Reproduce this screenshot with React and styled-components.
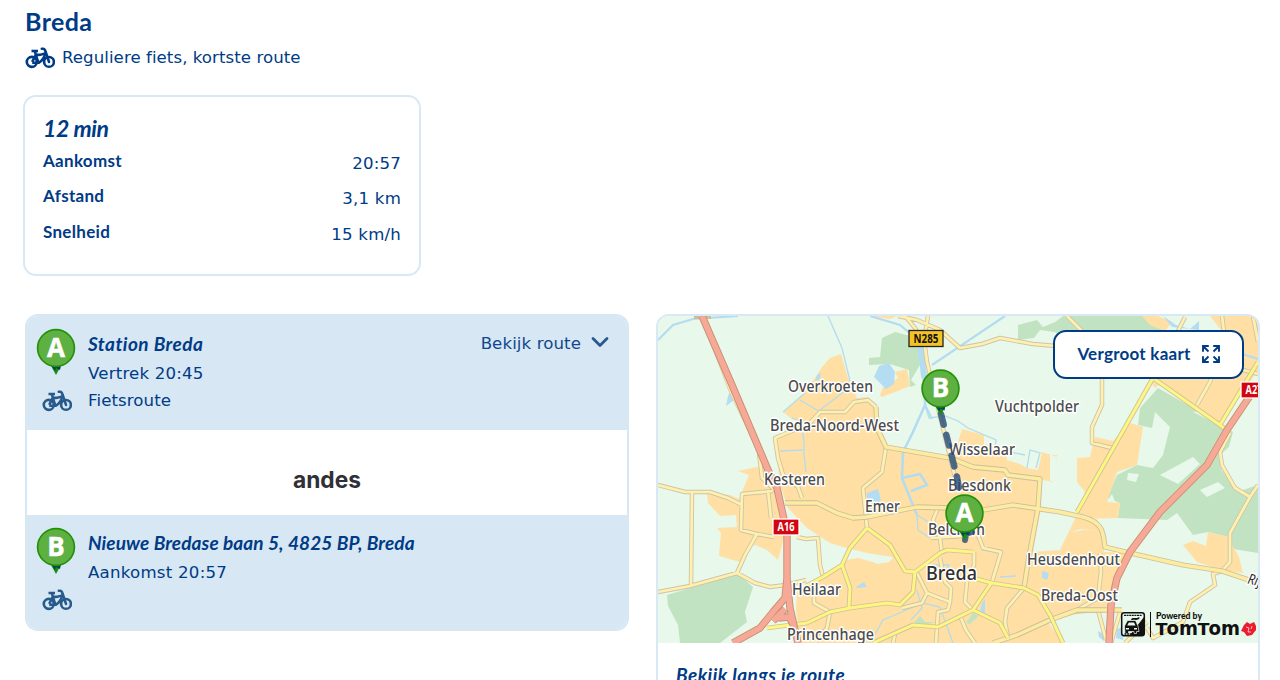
import React from 'react'
import styled, { createGlobalStyle } from 'styled-components'

const GlobalStyle = createGlobalStyle`
	* {
		box-sizing: border-box;
	}

	body {
		margin: 0;
		background: #fff;
		overflow: hidden;
	}
`

const Page = styled.main`
	width: 1280px;
	height: 680px;
	overflow: hidden;
	padding: 4px 20px 0 25px;
	background-color: #fff;
	color: #003b86;
	font-family: 'DejaVu Sans', Verdana, sans-serif;
	font-size: 16.6px;
	letter-spacing: 0.06px;
`

const Title = styled.h1`
	margin: 0;
	height: 35px;
	font: 700 25px/35px Lato, sans-serif;
	letter-spacing: 0.4px;
`

const Mode = styled.div`
	display: flex;
	align-items: center;
	gap: 7px;
	height: 36px;
	white-space: nowrap;
`

const BikeSvg = styled.svg`
	display: block;
	flex: none;
	width: 30px;
	height: 23px;
	color: ${(props) => props.$color};
`

const Summary = styled.section`
	width: 398px;
	height: 181px;
	margin: 19.5px 0 0 -2px;
	padding: 15px 18px;
	border: 2px solid #d8e9f5;
	border-radius: 13px;
`

const Duration = styled.h2`
	margin: 0 0 2px;
	font: italic 700 23px/32px Lato, sans-serif;
	letter-spacing: -0.4px;
`

const SummaryRow = styled.div`
	display: flex;
	justify-content: space-between;
	height: 35.5px;
`

const Term = styled.span`
	font: 700 17px/29px Lato, sans-serif;
	letter-spacing: 0.3px;
`

const Value = styled.span`
	line-height: 35px;
	letter-spacing: 0.2px;
`

const Columns = styled.div`
	display: flex;
	gap: 27px;
	margin-top: 38.5px;
	align-items: flex-start;
`

const RouteCard = styled.section`
	width: 604px;
	height: 317px;
	border: 2px solid #d7e7f4;
	border-radius: 13px;
	overflow: hidden;
`

const Stop = styled.div`
	display: flex;
	height: 114px;
	padding: 12px 17px 0 9px;
	background-color: #d7e7f4;
`

const StopIcons = styled.div`
	display: flex;
	flex-direction: column;
	width: 40px;
	gap: 13px;

	${BikeSvg} {
		margin-left: 6px;
	}
`

const PinSvg = styled.svg`
	display: block;
	width: 40px;
	height: 48px;
	overflow: visible;
`

const StopText = styled.div`
	flex: 1;
	padding: 0 0 0 12px;
	white-space: nowrap;
`

const StopName = styled.h3`
	margin: 0;
	font: italic 700 19px/32px Lato, sans-serif;
	letter-spacing: ${(props) => props.$spacing || 0}px;
`

const StopLine = styled.div`
	line-height: 27px;
	letter-spacing: ${(props) => props.$spacing || 0.1}px;
`

const RouteToggle = styled.button`
	display: flex;
	align-items: center;
	align-self: flex-start;
	gap: 9px;
	height: 30px;
	padding: 0;
	border: none;
	background: none;
	color: #10488f;
	font: inherit;
	letter-spacing: 0.1px;
`

const Sponsor = styled.div`
	display: flex;
	align-items: center;
	justify-content: center;
	height: 85px;
	padding-top: 11px;
	color: #303036;
`

const MapCard = styled.section`
	width: 604px;
	height: 380px;
	border: 2px solid #d8e9f5;
	border-radius: 13px;
	overflow: hidden;
`

const MapArea = styled.div`
	position: relative;
	height: 327px;
`

const MapSvg = styled.svg`
	display: block;
	width: 600px;
	height: 327px;
`

const EnlargeButton = styled.button`
	position: absolute;
	top: 14px;
	right: 14px;
	display: flex;
	align-items: center;
	justify-content: center;
	gap: 11px;
	width: 191px;
	height: 49px;
	padding: 0 0 2px;
	border: 2px solid #003b86;
	border-radius: 13px;
	background-color: #fff;
	color: #003b86;
	font: 700 17px/24px Lato, sans-serif;
	letter-spacing: 0.25px;
	white-space: nowrap;
`

const AlongRoute = styled.h3`
	margin: 0;
	padding: 16px 18px;
	font: italic 700 19px/32px Lato, sans-serif;
	letter-spacing: 0.43px;
`

const Bike = ({ color = '#003b86' }) => (
	<BikeSvg $color={color} viewBox="0 0 30 23" fill="none" stroke="currentColor" strokeWidth="2.600">
		<circle cx="6.800" cy="15.9" r="5" />
		<circle cx="24" cy="15.9" r="4.900" />
		<path d="M6.500 5H13" />
		<path d="M10 5.500L10.800 8.800L7.200 15.9M10.500 8.900H13.500C16.500 8.900 18 7.700 20.2 7.500M10.800 8.800L13.400 16.700H7.2M20.3 7.5C19.500 11 17.500 14.500 13.600 17" />
		<path d="M16.800 2.7H18.2C19.6 2.7 20 3.8 20.5 5.500L24 15.9" strokeLinecap="round" />
	</BikeSvg>
)

const PinShape = ({ letter }) => (
	<g>
		<path d="M14.5 37L20 47L25.500 37Z" fill="#16900c" />
		<path d="M15.500 38L19 43L20 40L24 42L25 37Z" fill="#07415f" />
		<circle cx="20" cy="20" r="18.400" fill="#5fb043" stroke="#239209" strokeWidth="1.700" />
		<text x="20" y="28.800" textAnchor="middle" fill="#fff" stroke="#fff" strokeWidth=".5" fontFamily="Open Sans, sans-serif" fontWeight="700" fontSize="26" letterSpacing="0">{letter}</text>
	</g>
)

const Pin = ({ letter }) => (
	<PinSvg viewBox="0 0 40 48">
		<PinShape letter={letter} />
	</PinSvg>
)

const urban = [
	'M841 354L830 358L822 367L817 375L803 394L783 412L792 419L808 424L773 440L778 465L780 485L788 508L807 528L830 543L850 549L872 554L893 557L888 562L876 563L858 558L847 560L843 565L820 580L797 593L796 610L798 625L797 643H1063L1048 622L1077 614L1110 606L1117 578L1130 553L1104 552L1105 542L1097 519L1075 519L1060 550L1033 552L1041 508L1042 480L1055 482L1057 457L1042 452L1038 470L1027 468L1020 464L1007 460L1006 450L984 444V435L962 429L958 442L950 456L886 447L877 430L876 405L868 397L857 398L848 378Z',
	'M738 471L757 467L768 470L780 505L784 537L778 560L767 550L755 545L750 547L740 562L719 556L721 533L717 528L737 527L736 515L720 516L708 503L707 494L730 495L742 500V492L749 475Z',
	'M880 395L883 387L898 378L895 372L907 369L910 386L895 392L882 397Z',
	'M1095 437L1113 441L1130 423L1143 427L1137 465L1117 472L1107 502L1120 503L1118 518L1075 519L1085 492L1077 482V458L1090 457Z',
	'M1183 545L1193 541L1206 546L1208 532L1228 537L1239 557L1243 573L1222 570L1197 562Z',
	'M1142 316L1158 316L1172 322L1165 331L1150 325ZM1210 316H1258V370L1220 425L1153 380L1190 360L1225 335ZM1150 381L1160 384L1155 388Z',
	'M1050 455H1057L1055 482H1050Z',
	'M870 316H897L890 319Z',
]

const forest = [
	'M667 595L727 577L737 573L753 587L745 612L747 622L720 643H680L678 625L668 606Z',
	'M869 358L880 357L882 338L895 332L918 338L920 365L911 380L916 385L910 387L909 370L890 364L869 365Z',
	'M1018 325L1037 320L1043 327L1060 320V333L1040 330L1034 338L1018 340Z',
	'M1063 316H1147L1166 329L1160 337H1060L1050 326Z',
	'M1158 388L1193 408L1233 432L1229 447L1220 455L1222 471L1240 491L1258 485V553L1233 549L1228 537L1208 532L1193 535L1177 513L1167 520L1118 518L1120 503L1107 498L1117 475L1137 465L1153 468L1163 455L1170 427L1155 412L1152 428L1138 425L1140 408L1150 397Z',
	'M1041 567L1053 568L1050 581L1040 577Z',
]

const parks = [
	'M920 616L925 622L935 622L920 627L913 624Z',
	'M973 613L979 616L970 624L966 623Z',
]

const clearings = [
	'M1160 475L1193 457L1200 464L1178 484L1170 480ZM1193 412L1208 410L1217 424L1205 418Z',
	'M1200 490L1218 482L1225 488L1207 497ZM1128 473L1139 474L1136 482L1127 480Z',
	'M1242 566L1258 559V570L1245 572Z',
]

const water = [
	'M874 377L879 366L889 363L895 372L894 384L886 389Z',
	'M731 390L738 397L726 406L728 396Z',
	'M867 493L878 489L881 500L875 505L867 501Z',
	'M982 603L985 599V614L980 612ZM1098 631L1105 635L1104 641L1099 637ZM1117 629L1125 626L1123 640L1116 638Z',
	'M856 587L864 582L867 587L857 588ZM817 375L821 373L820 379L815 381Z',
	'M1042 571L1049 573L1047 580L1042 578ZM1163 316L1172 327L1199 330V321L1190 329L1176 325Z',
]

const streams = [
	'M828 316L842 348L850 381',
	'M917 515L918 530L930 538',
	'M925 405L929 418L945 416L958 421L968 428L996 440L995 452M1010 452L1025 455M1027 468L1030 450L1040 453L1036 468',
	'M783 412L805 393M792 418L812 425M800 400L822 413M820 410L850 387M800 423L804 440L804 455L806 472M780 451L803 450',
	'M932 565H949L946 575L961 571M982 550L993 551M1000 577L1016 576M917 515L928 522M870 643L883 620L923 603L940 607L953 643M917 590L922 608L911 620',
]

const minorRoads = [
	'M658 485L685 492L710 492L728 498L742 505M692 493L691 585',
	'M773 491L742 494L741 530L757 534L774 537M768 490L771 518M757 534L745 555L737 573',
	'M658 592L690 586L737 573L755 583L770 587L786 585L806 580',
	'M759 452L762 478L777 492',
	'M876 407L868 400L854 402L845 412L820 412L810 423L775 438L778 458L783 475L798 487L802 498',
	'M797 537L806 539L818 538L820 565L823 577M814 588V603L830 612L827 628L815 643',
	'M886 447L882 472L863 488L867 528',
	'M902 608L922 603L927 593L917 573M927 593L950 602',
	'M940 558L945 582L951 588L950 602L948 610L938 612L936 643',
	'M938 508L933 520L940 538L942 554M931 538L965 536M978 535L983 548L1001 552L992 582',
	'M974 552V565L967 582L965 602L973 610M961 618L966 630L975 643M893 643L895 634',
	'M928 316L924 340L927 362L938 408L955 477',
	'M898 316L917 320L940 330L960 348L982 344L1000 338L1033 344L1056 346',
	'M905 316L915 328L922 342',
	'M1067 316L1083 332M1102 377V405L1092 427V443L1112 448',
	'M1185 317L1178 331M1222 316L1225 340L1210 382L1197 405',
	'M1253 316L1258 342M1243 370L1258 374',
	'M1230 433L1220 452L1222 465L1235 488L1250 497L1258 485M1250 497L1230 533V562L1222 571L1213 574L1215 585L1190 602L1183 622L1153 638L1147 628',
	'M1024 588L1007 608L1005 622L1008 638M1100 553L1101 572L1098 598L1077 610',
	'M1125 643L1147 622M1050 620L1070 612L1098 610L1106 640M1120 612L1111 643',
]

const majorRoads = [
	'M785 503H817L837 513L853 518L867 517L917 507L950 508L983 510L1013 505L1060 512L1083 517C1105 523 1103 535 1105 547L1130 553L1183 565L1222 571L1258 583',
	'M876 407L877 428L886 447L950 458L973 467L1005 470L1008 475L1040 479L1038 508L1028 562L1024 588',
	'M993 643L1017 635L1050 620L1077 610H1122',
]

const yellowRoads = [
	'M867 528L890 545L905 571L915 572L940 553L947 550L973 552',
	'M867 528L850 548L842 565L850 588L849 607M842 565L823 577L806 586',
	'M915 572L913 592L900 605L887 603L850 608L830 612L807 623L767 628',
	'M873 643L913 625L938 627L973 610L992 582',
	'M973 578L992 583L1024 588L1038 595L1050 615L1063 643M973 610L1000 623L1008 638',
	'M1077 512L1153 378L1220 425L1228 431M1220 425L1258 362',
]

const motorways = [
	'M702 316L732 385L768 470L777 488L783 515L787 532V578L790 608L798 643',
	'M787 578L785 598L773 612L760 628L733 643M778 618L789 617L794 626M773 621L785 609',
	'M1258 384L1227 430L1207 465L1160 512L1130 552L1117 578L1111 605L1109 643',
]

const places = [
	{ name: 'Overkroeten', x: 788, y: 391.5, width: 85 },
	{ name: 'Breda-Noord-West', x: 770, y: 431, width: 129 },
	{ name: 'Kesteren', x: 764, y: 484.5, width: 61 },
	{ name: 'Emer', x: 865, y: 512, width: 35 },
	{ name: 'Vuchtpolder', x: 995, y: 412, width: 84 },
	{ name: 'Wisselaar', x: 949, y: 454.5, width: 66 },
	{ name: 'Biesdonk', x: 948, y: 491, width: 63 },
	{ name: 'Belcrum', x: 928, y: 535, width: 57 },
	{ name: 'Heusdenhout', x: 1027, y: 564.5, width: 93 },
	{ name: 'Breda-Oost', x: 1041, y: 601, width: 77 },
	{ name: 'Heilaar', x: 792, y: 594.5, width: 49 },
	{ name: 'Princenhage', x: 787, y: 640, width: 87 },
	{ name: 'Breda', x: 926, y: 579.5, width: 51, size: 20 },
]

const Roads = ({ lines, casing, fill, width }) => (
	<g fill="none" strokeLinejoin="round">
		<path d={lines.join('')} stroke={casing} strokeWidth={width + 1.8} />
		<path d={lines.join('')} stroke={fill} strokeWidth={width} />
	</g>
)

const Shield = ({ x, y, width, label, fill, color, border }) => (
	<g>
		<rect x={x} y={y} width={width} height="16" fill={fill} stroke={border} strokeWidth="1.300" />
		<text x={x + width / 2} y={y + 12.3} textAnchor="middle" fill={color} fontFamily="Open Sans, sans-serif" fontWeight="700" fontSize="11.500" textLength={width - 9} lengthAdjust="spacingAndGlyphs">{label}</text>
	</g>
)

const TomTom = () => (
	<g>
		<rect x="1121.700" y="612.700" width="22.600" height="23" rx="2.500" fill="#e8f8ea" stroke="#111" strokeWidth="1.500" />
		<path d="M1144 617V635H1130Z" fill="#111" />
		<path d="M1124.500 626L1127.500 620.500H1135.500L1138 626L1139 631.500H1136.500V633.500H1134V631.500H1128.500V633.500H1125Z" fill="#111" stroke="#e8f8ea" strokeWidth=".7" />
		<path d="M1128.800 622.500H1134L1135.500 625.500H1127.200ZM1126 628H1129V629.500H1126ZM1134 628H1137V629.500H1134Z" fill="#e8f8ea" />
		<path d="M1132 620C1132 617 1138 621 1139 617.500" fill="none" stroke="#111" strokeWidth="1.800" />
		<path d="M1124 615.300H1142M1124.500 634H1134" fill="none" stroke="#111" strokeWidth="1.300" strokeDasharray="2 .6" />
		<path d="M1150.500 612V637" stroke="#111" />
		<text x="1156" y="618.500" fontFamily="Lato, sans-serif" fontWeight="900" fontSize="8.500" letterSpacing="0" textLength="46" lengthAdjust="spacingAndGlyphs" fill="#111">Powered by</text>
		<g fontFamily="DejaVu Sans, sans-serif" fontWeight="700" letterSpacing="0" fill="#111">
			<text x="1155.500" y="635" fontSize="15.500" textLength="12" lengthAdjust="spacingAndGlyphs">T</text>
			<text x="1166.500" y="635" fontSize="20" textLength="31.500" lengthAdjust="spacingAndGlyphs">om</text>
			<text x="1197.500" y="635" fontSize="15.500" textLength="12" lengthAdjust="spacingAndGlyphs">T</text>
			<text x="1208.500" y="635" fontSize="20" textLength="31.500" lengthAdjust="spacingAndGlyphs">om</text>
		</g>
		<path d="M1244 625L1247 622L1250 624L1254 622L1256 626V630L1252 635L1247 636L1244 632L1241 631Z" fill="#ed1b2e" />
		<path d="M1246 627L1249 628L1248 632L1251 632M1252 626L1251 629" fill="none" stroke="#fff" strokeWidth=".7" />
	</g>
)

const RouteMap = () => (
	<MapSvg viewBox="658 316 600 327">
		<rect x="658" y="316" width="600" height="327" fill="#e8f8ea" />
		<path d={forest.join('')} fill="#c2e3c2" />
		<path d={clearings.join('')} fill="#e8f8ea" />
		<path d={urban.join('')} fill="#ffdfa3" />
		<path d={parks.join('')} fill="#c2e3c2" />
		<path d="M1115 502L1108 500L1112 494ZM1070 533L1083 530L1098 531L1080 529Z" fill="#e8f8ea" />
		<path d="M850 548L858 553L872 554L893 558L889 562L877 564L868 558L850 556Z" fill="#e8f8ea" />
		<path d={water.join('')} fill="#b4dcf3" />
		<path d={streams.join('')} fill="none" stroke="#b4dcec" strokeWidth="1.300" />
		<path d="M658 340L673 325L693 319L738 316M1005 316L932 365M870 316L900 325L918 340M925 405L932 419M1242 354L1258 359" fill="none" stroke="#b4dcf0" strokeWidth="2.200" />
		<path d="M925 378V405L913 432L903 452L902 478L910 498L917 515M902 478L920 474L927 485L911 491" fill="none" stroke="#b4dcf0" strokeWidth="2.600" />
		<path d="M920 342L924 376L928 386" fill="none" stroke="#b4dcf0" strokeWidth="6" />
		<path d="M705 326L730 391L759 452" fill="none" stroke="#cdc4ae" strokeWidth="2.600" />
		<path d="M705 326L730 391L759 452" fill="none" stroke="#fff0ab" strokeWidth="1.400" />
		<Roads lines={minorRoads} casing="#cdc4ae" fill="#fff0ab" width={2.7} />
		<Roads lines={majorRoads} casing="#cbbf9f" fill="#fdeb9f" width={3.5} />
		<Roads lines={yellowRoads} casing="#cec39b" fill="#fff681" width={2.9} />
		<path d="M694 317H711" stroke="#cbbf9f" strokeWidth="4" />
		<Roads lines={motorways} casing="#c98f70" fill="#f6a997" width={5.6} />
		<g fontFamily="Noto Sans, sans-serif" fill="#4b4b4b" stroke="#fff" strokeWidth="3" strokeLinejoin="round" paintOrder="stroke">
			{places.map(({ name, x, y, width, size = 16 }) => (
				<text key={name} x={x} y={y} fontSize={size} fontWeight="500" fill={size > 16 ? '#303030' : undefined} textLength={width} lengthAdjust="spacingAndGlyphs">{name}</text>
			))}
			<text x="1247" y="583.500" fontSize="14.500" fontStyle="italic" fill="#303030" textLength="27" lengthAdjust="spacingAndGlyphs" transform="rotate(12 1247 583)">Rijen</text>
		</g>
		<Shield x={909} y={330.5} width={34} label="N285" fill="#f4c323" color="#111" border="#222" />
		<Shield x={773} y={519} width={26} label="A16" fill="#d40511" color="#fff" border="#fff" />
		<Shield x={1241} y={382} width={26} label="A27" fill="#d40511" color="#fff" border="#fff" />
		<path d="M941 414L957 477L960 494" fill="none" stroke="#234878" strokeOpacity=".8" strokeWidth="6.500" strokeLinecap="round" strokeDasharray="11 10.500" />
		<path d="M965 540L966 534L972 532" fill="none" stroke="#234878" strokeOpacity=".8" strokeWidth="6" strokeLinecap="round" />
		<g transform="translate(920.500 368.500)"><PinShape letter="B" /></g>
		<g transform="translate(944.500 493.500)"><PinShape letter="A" /></g>
		<TomTom />
	</MapSvg>
)

function App() {
	return (
		<Page>
			<GlobalStyle />
			<Title>Breda</Title>
			<Mode>
				<Bike />
				Reguliere fiets, kortste route
			</Mode>
			<Summary>
				<Duration>12 min</Duration>
				<SummaryRow><Term>Aankomst</Term><Value>20:57</Value></SummaryRow>
				<SummaryRow><Term>Afstand</Term><Value>3,1 km</Value></SummaryRow>
				<SummaryRow><Term>Snelheid</Term><Value>15 km/h</Value></SummaryRow>
			</Summary>
			<Columns>
				<RouteCard>
					<Stop>
						<StopIcons>
							<Pin letter="A" />
							<Bike color="#285a8c" />
						</StopIcons>
						<StopText>
							<StopName $spacing={0.45}>Station Breda</StopName>
							<StopLine $spacing={0.2}>Vertrek 20:45</StopLine>
							<StopLine>Fietsroute</StopLine>
						</StopText>
						<RouteToggle>
							Bekijk route
							<svg width="20" height="14" viewBox="0 0 20 14" fill="none" stroke="#285a8c" strokeWidth="2.800" strokeLinecap="round" strokeLinejoin="round">
								<path d="M3 2.500L10 9.500L17 2.500" />
							</svg>
						</RouteToggle>
					</Stop>
					<Sponsor>
						<svg width="72" height="30" viewBox="0 0 72 30">
							<text x="2" y="24.800" fontFamily="Inter, sans-serif" fontWeight="700" fontSize="22.500" letterSpacing="0" fill="currentColor" textLength="68" lengthAdjust="spacingAndGlyphs">andes</text>
						</svg>
					</Sponsor>
					<Stop>
						<StopIcons>
							<Pin letter="B" />
							<Bike color="#285a8c" />
						</StopIcons>
						<StopText>
							<StopName $spacing={0.1}>Nieuwe Bredase baan 5, 4825 BP, Breda</StopName>
							<StopLine $spacing={0.25}>Aankomst 20:57</StopLine>
						</StopText>
					</Stop>
				</RouteCard>
				<MapCard>
					<MapArea>
						<RouteMap />
						<EnlargeButton>
							Vergroot kaart
							<svg width="18" height="18" viewBox="0 0 18 18" fill="none" stroke="currentColor" strokeWidth="1.900">
								<path d="M1 6.800V1H6.800M1 1L6.500 6.500M11.200 1H17V6.800M17 1L11.500 6.500M1 11.200V17H6.800M1 17L6.500 11.500M17 11.200V17H11.200M17 17L11.500 11.500" />
							</svg>
						</EnlargeButton>
					</MapArea>
					<AlongRoute>Bekijk langs je route</AlongRoute>
				</MapCard>
			</Columns>
		</Page>
	)
}

export default App
